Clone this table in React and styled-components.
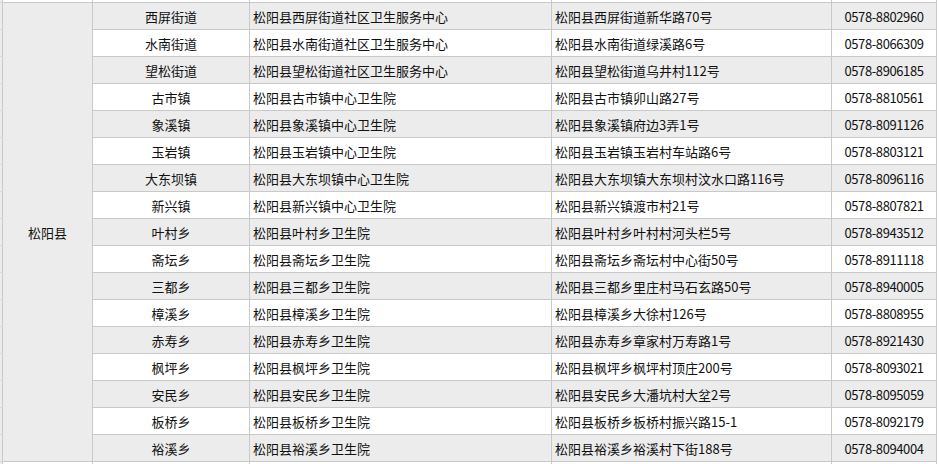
import React from 'react';
import styled, { createGlobalStyle } from 'styled-components';

const GlobalStyle = createGlobalStyle`
  html, body {
    margin: 0;
    padding: 0;
    background: #ffffff;
  }
  body {
    font-family: "Noto Sans CJK SC", "Noto Sans", sans-serif;
  }
`;

// 表格视图：左侧一列只露出边缘，上下各露出一行的边
const Sheet = styled.div`
  width: 940px;
  height: 464px;
  overflow: hidden;
  display: grid;
  grid-template-columns: 3px 90px 157px 302px 280px 105px;
  grid-template-rows: 3px repeat(17, 27px) 3px;
  background: #ffffff;
`;

const Cell = styled.div`
  box-sizing: border-box;
  border-right: 1px solid #c9c9c9;
  border-bottom: 1px solid #c9c9c9;
  background: ${p => (p.$shaded ? '#ececec' : '#ffffff')};
  color: #111111;
  font-size: 13px;
  line-height: 26px;
  padding: ${p => (p.$align === 'left' ? '1px 0 0 3px' : '1px 0 0 0')};
  text-align: ${p => p.$align || 'center'};
  white-space: nowrap;
  overflow: hidden;
`;

const PhoneCell = styled(Cell)`
  letter-spacing: -0.4px;
`;

const Strip = styled.div`
  box-sizing: border-box;
  background: #ececec;
  border-right: 1px solid #c9c9c9;
  border-bottom: 1px solid #dadada;
`;

const CountyCell = styled(Cell)`
  grid-column: 2;
  grid-row: 2 / span 17;
  display: flex;
  align-items: center;
  justify-content: center;
  line-height: 1;
`;

const Sliver = styled(Cell)`
  padding: 0;
  border-bottom: ${p => (p.$bottom ? '0' : '1px solid #c9c9c9')};
`;

const rows = [
  ['西屏街道', '松阳县西屏街道社区卫生服务中心', '松阳县西屏街道新华路70号', '0578-8802960'],
  ['水南街道', '松阳县水南街道社区卫生服务中心', '松阳县水南街道绿溪路6号', '0578-8066309'],
  ['望松街道', '松阳县望松街道社区卫生服务中心', '松阳县望松街道乌井村112号', '0578-8906185'],
  ['古市镇', '松阳县古市镇中心卫生院', '松阳县古市镇卯山路27号', '0578-8810561'],
  ['象溪镇', '松阳县象溪镇中心卫生院', '松阳县象溪镇府边3弄1号', '0578-8091126'],
  ['玉岩镇', '松阳县玉岩镇中心卫生院', '松阳县玉岩镇玉岩村车站路6号', '0578-8803121'],
  ['大东坝镇', '松阳县大东坝镇中心卫生院', '松阳县大东坝镇大东坝村汶水口路116号', '0578-8096116'],
  ['新兴镇', '松阳县新兴镇中心卫生院', '松阳县新兴镇渡市村21号', '0578-8807821'],
  ['叶村乡', '松阳县叶村乡卫生院', '松阳县叶村乡叶村村河头栏5号', '0578-8943512'],
  ['斋坛乡', '松阳县斋坛乡卫生院', '松阳县斋坛乡斋坛村中心街50号', '0578-8911118'],
  ['三都乡', '松阳县三都乡卫生院', '松阳县三都乡里庄村马石玄路50号', '0578-8940005'],
  ['樟溪乡', '松阳县樟溪乡卫生院', '松阳县樟溪乡大徐村126号', '0578-8808955'],
  ['赤寿乡', '松阳县赤寿乡卫生院', '松阳县赤寿乡章家村万寿路1号', '0578-8921430'],
  ['枫坪乡', '松阳县枫坪乡卫生院', '松阳县枫坪乡枫坪村顶庄200号', '0578-8093021'],
  ['安民乡', '松阳县安民乡卫生院', '松阳县安民乡大潘坑村大坌2号', '0578-8095059'],
  ['板桥乡', '松阳县板桥乡卫生院', '松阳县板桥乡板桥村振兴路15-1', '0578-8092179'],
  ['裕溪乡', '松阳县裕溪乡卫生院', '松阳县裕溪乡裕溪村下街188号', '0578-8094004'],
];

const SliverRow = ({ bottom }) => (
  <>
    <Strip />
    <Sliver $bottom={bottom} />
    <Sliver $bottom={bottom} />
    <Sliver $bottom={bottom} />
    <Sliver $bottom={bottom} />
    <Sliver $bottom={bottom} />
  </>
);

const App = () => (
  <>
    <GlobalStyle />
    <Sheet>
      <SliverRow />
      <CountyCell $shaded>松阳县</CountyCell>
      {rows.map(([town, name, address, phone], i) => {
        const shaded = i % 2 === 0;
        return (
          <React.Fragment key={town}>
            <Strip />
            <Cell $shaded={shaded}>{town}</Cell>
            <Cell $shaded={shaded} $align="left">{name}</Cell>
            <Cell $shaded={shaded} $align="left">{address}</Cell>
            <PhoneCell $shaded={shaded}>{phone}</PhoneCell>
          </React.Fragment>
        );
      })}
      <SliverRow bottom />
    </Sheet>
  </>
);

export default App;
